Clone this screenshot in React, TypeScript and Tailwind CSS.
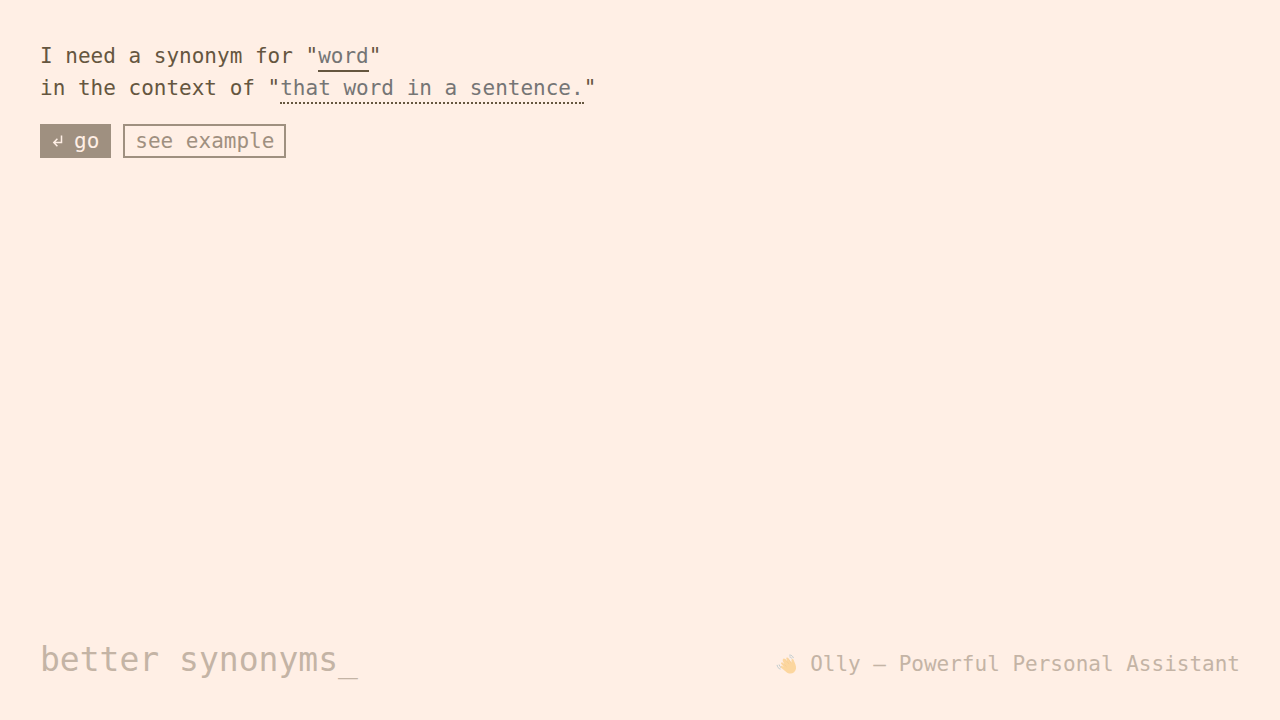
import React, { useState } from "react";

function ReturnIcon() {
  return (
    <svg viewBox="0 0 12 14" className="h-3.5 w-3 shrink-0" fill="none" stroke="currentColor" strokeWidth="1.5" aria-hidden="true">
      <path d="M9.500 1.500V8.500H2M5.400 4.800L1.800 8.500L5.400 12.200" />
    </svg>
  );
}

function WavingHand() {
  return (
    <svg viewBox="0 0 24 24" className="h-[22px] w-[22px] shrink-0" fill="none" aria-hidden="true">
      <path
        d="M8 6.400c.6-.6 1.300-.4 1.800.2l2.400 2.800-1-3.300c-.1-1 1.200-1.500 1.800-.6l4 5.200-.1-3.400c.2-1.200 1.800-1.100 2.200 0l2 5c1.300 3.400 1 6.600-1.400 8.700-2.500 2-6 1.800-8.500-.3L5.300 15.700c-.9-1 .2-2.200 1.300-1.500l1.900 1.200-2.900-3.600c-.7-1 .5-2 1.400-1.200l2.400 2.300-2-4.200c-.3-.8-.1-1.600.6-2.300Z"
        fill="#fbc66f"
      />
      <path d="M9.800 6.600l4.400 5.500M7 10.600l4.500 4.300M13 5.500l3.600 5.500" stroke="#e9a94f" strokeWidth=".5" />
      <path d="M1.200 13c.2 2.300 1.500 4 3.700 4.600M3.400 12.600c.2 1.500.9 2.600 2.100 3.300M14.500 2.300c2.200-.2 3.800 1 4.500 3.200M14.700 4.200c1.200 0 2 .7 2.500 1.900" stroke="#8fb0bd" strokeWidth="1" />
    </svg>
  );
}

export default function App() {
  const [word, setWord] = useState("");
  const [context, setContext] = useState("");

  return (
    <div className="flex min-h-screen flex-col justify-between bg-[#ffefe5] p-10 font-['DejaVu_Sans_Mono',monospace] text-[21px] leading-8 text-[#65563f]">
      <main>
        <form onSubmit={(event) => event.preventDefault()}>
          <div className="flex items-start">
            <label htmlFor="word" className="whitespace-pre">I need a synonym for "</label>
            <input
              id="word"
              value={word}
              onChange={(event) => setWord(event.target.value)}
              placeholder="word"
              autoComplete="off"
              className="h-8 w-[4ch] border-b-2 border-[#65563f] bg-transparent pt-0.5 outline-none placeholder:text-[#757575]"
            />
            <span>"</span>
          </div>
          <div className="flex items-start">
            <label htmlFor="context" className="whitespace-pre">in the context of "</label>
            <input
              id="context"
              value={context}
              onChange={(event) => setContext(event.target.value)}
              placeholder="that word in a sentence."
              autoComplete="off"
              className="h-8 w-[24ch] border-b-2 border-dotted border-[#65563f] bg-transparent pt-0.5 outline-none placeholder:text-[#757575]"
            />
            <span>"</span>
          </div>
          <div className="mt-5 flex gap-3">
            <button type="submit" className="flex items-center gap-2.5 border-2 border-[#9f9080] bg-[#9f9080] px-2.5 py-px leading-7 text-[#ffefe5]">
              <ReturnIcon />
              go
            </button>
            <button type="button" className="flex items-center border-2 border-[#9f9080] px-2.5 py-px leading-7 text-[#9f9080]">
              see example
            </button>
          </div>
        </form>
      </main>
      <footer className="flex items-end justify-between text-[#c4b4a5]">
        <h1 className="text-[33px] leading-10">better synonyms_</h1>
        <a href="#olly" className="flex items-center gap-3">
          <span className="opacity-60"><WavingHand /></span>
          <span>Olly — Powerful Personal Assistant</span>
        </a>
      </footer>
    </div>
  );
}
